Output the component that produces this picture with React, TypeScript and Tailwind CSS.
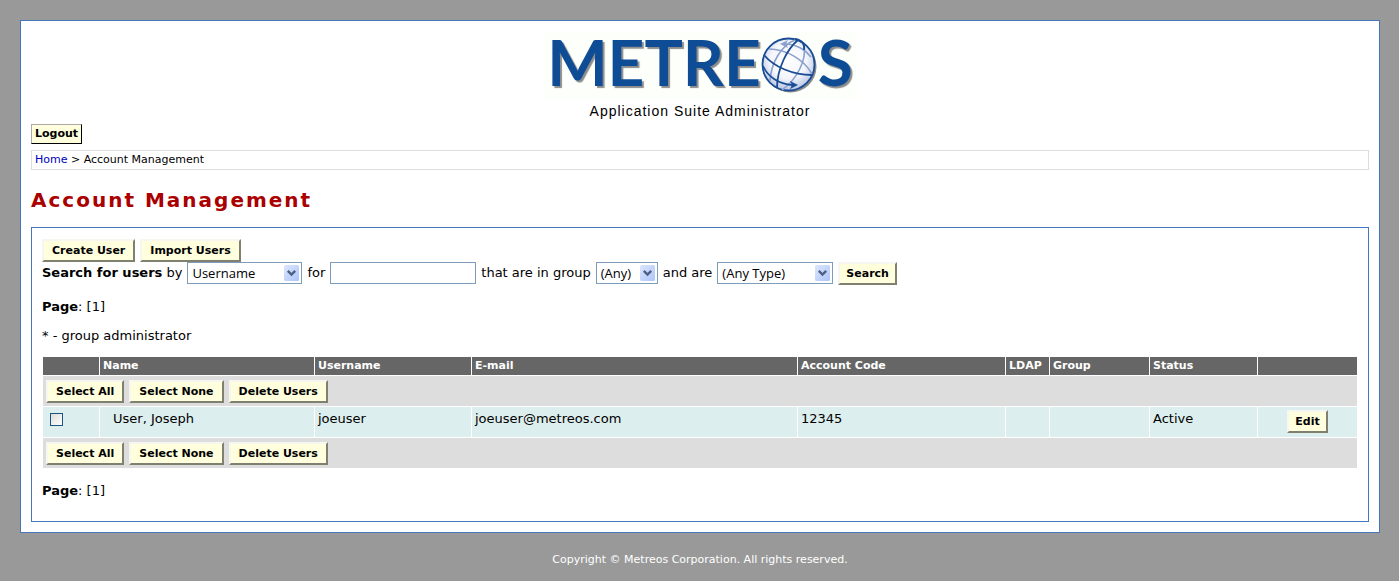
import type { ButtonHTMLAttributes, ReactNode, SelectHTMLAttributes } from "react";

type ActionButtonProps = ButtonHTMLAttributes<HTMLButtonElement> & { compact?: boolean };

function ActionButton({ children, compact = false, ...rest }: ActionButtonProps) {
  return (
    <button
      type="button"
      className={`h-[23px] whitespace-nowrap border-2 border-t-[#f8f6f0] border-r-[#808070] border-b-[#808070] border-l-[#f8f6f0] bg-[#ffffdd] text-[11px] leading-[19px] font-bold ${compact ? "px-1.5" : "px-2"}`}
      {...rest}
    >
      {children}
    </button>
  );
}

function DropDown({ width, children, ...rest }: SelectHTMLAttributes<HTMLSelectElement> & { width: string }) {
  return (
    <span className={`relative inline-block h-[22px] ${width}`}>
      <select
        className="block h-full w-full appearance-none border border-[#7f9db9] bg-white pr-4 pl-1 font-['Open_Sans','Noto_Sans',sans-serif] text-[13px] leading-5"
        {...rest}
      >
        {children}
      </select>
      <svg className="pointer-events-none absolute top-[3px] right-[3px]" width="15" height="16" viewBox="0 0 15 16" aria-hidden="true">
        <defs>
          <linearGradient id="arrow-face" x1="0" y1="0" x2="1" y2="1">
            <stop offset="0" stopColor="#dce6fe" />
            <stop offset="1" stopColor="#adc5fa" />
          </linearGradient>
        </defs>
        <rect width="15" height="16" rx="1.5" fill="url(#arrow-face)" />
        <path d="M3.8 5.8 7.5 9.5l3.7-3.7" fill="none" stroke="#4d6185" strokeWidth="2.4" />
      </svg>
    </span>
  );
}

function Globe() {
  return (
    <svg width="57" height="58" viewBox="0 0 57 58" aria-hidden="true" className="mt-[5px] shrink-0">
      <defs>
        <radialGradient id="globe-face" cx="0.5" cy="0.42" r="0.58">
          <stop offset="0" stopColor="#ffffff" />
          <stop offset="0.6" stopColor="#f4f6fc" />
          <stop offset="1" stopColor="#b7c4e2" />
        </radialGradient>
      </defs>
      <circle cx="29.5" cy="30.5" r="26" fill="#8c8c8c" />
      <circle cx="27.5" cy="28.5" r="26" fill="url(#globe-face)" stroke="#1a4c94" strokeWidth="1.8" />
      <g fill="none" stroke="#8ba0cc" strokeWidth="1.6">
        <path d="M8 13C24 13 43 23 51 38" />
        <path d="M25 8C34 8 44 13 50 21" />
        <path d="M34 4C21 9 10 26 9 45" />
        <path d="M43 9C46 25 35 44 21 54" />
      </g>
      <path d="M19 8l8-4-2 4 2 4z" fill="#8ba0cc" />
      <g fill="none" stroke="#1a4c94" strokeWidth="1.8">
        <path d="M3 19C13 31 32 39 51 39" />
        <path d="M2 30C7 41 18 48 31 49" />
        <path d="M37 4C26 13 16 33 16 52" />
        <path d="M34 3C41 4 44 8 43 14" />
      </g>
      <path d="M37 49l-8-4 2 4-2 4z" fill="#1a4c94" />
    </svg>
  );
}

function Logo() {
  return (
    <div className="mx-auto flex h-[68px] w-[314px] items-start justify-center bg-[#fdfffb] font-['Lato',sans-serif] text-[64px] leading-[62px] font-bold text-[#0f4c96] [text-shadow:2px_2px_1px_#8c8c8c]">
      <span>METRE</span>
      <Globe />
      <span>S</span>
    </div>
  );
}

function PageList() {
  return (
    <p>
      <b>Page</b>: [1]
    </p>
  );
}

function BulkActions() {
  return (
    <tr className="h-[30px] bg-[#dddddd]">
      <td colSpan={9} className="px-[3px] py-0">
        <div className="flex gap-[5px]">
          <ActionButton>Select All</ActionButton>
          <ActionButton>Select None</ActionButton>
          <ActionButton>Delete Users</ActionButton>
        </div>
      </td>
    </tr>
  );
}

function Cell({ children }: { children?: ReactNode }) {
  return <td className="px-[3px] py-1">{children}</td>;
}

const headings = ["", "Name", "Username", "E-mail", "Account Code", "LDAP", "Group", "Status", ""];

export default function App() {
  return (
    <div className="min-h-screen bg-[#999999] py-5 pr-[19px] pl-5 font-['DejaVu_Sans',sans-serif] text-[13px] leading-4 text-black">
      <main className="border border-[#4477bb] bg-white p-2.5">
        <header>
          <Logo />
          <p className="mt-1 text-center font-['Liberation_Sans',sans-serif] text-[14px] leading-4 tracking-[1px]">
            Application Suite Administrator
          </p>
        </header>
        <button
          type="button"
          className="mt-[5px] block h-5 border border-t-[#aaaaaa] border-r-black border-b-black border-l-[#aaaaaa] bg-[#ffffdd] px-[3px] text-[11px] leading-[18px] font-bold"
        >
          Logout
        </button>
        <nav className="mt-1.5 border border-[#dddddd] px-[3px] text-[11px] leading-[18px]">
          <a href="#home" className="text-[#0000bb]">Home</a> &gt; Account Management
        </nav>
        <h1 className="mt-4 text-[20px] leading-7 font-bold tracking-widest text-[#aa0000]">Account Management</h1>

        <section className="mt-[13px] border border-[#4477bb] px-2.5 pt-[11px] pb-[22px]">
          <div className="flex gap-[5px]">
            <ActionButton>Create User</ActionButton>
            <ActionButton>Import Users</ActionButton>
          </div>
          <form className="flex flex-wrap items-start gap-x-[5px] leading-[22px]" onSubmit={(e) => e.preventDefault()}>
            <label htmlFor="field"><b>Search for users</b> by</label>
            <DropDown id="field" width="w-[115px]"><option>Username</option></DropDown>
            <label htmlFor="term">for</label>
            <input id="term" type="text" className="h-[22px] w-[146px] border border-[#7f9db9] bg-white px-1" />
            <label htmlFor="group">that are in group</label>
            <DropDown id="group" width="w-[62px]"><option>(Any)</option></DropDown>
            <label htmlFor="type">and are</label>
            <DropDown id="type" width="w-[116px]"><option>(Any Type)</option></DropDown>
            <ActionButton type="submit" compact>Search</ActionButton>
          </form>
          <div className="mt-3.5"><PageList /></div>
          <p className="mt-[13px]">* - group administrator</p>

          <table className="mt-3 w-full table-fixed border-separate border-spacing-[1px]">
            <colgroup>
              <col className="w-14" />
              <col className="w-[214px]" />
              <col className="w-[156px]" />
              <col />
              <col className="w-[207px]" />
              <col className="w-[43px]" />
              <col className="w-[99px]" />
              <col className="w-[107px]" />
              <col className="w-[99px]" />
            </colgroup>
            <thead>
              <tr className="h-[18px] bg-[#666666] text-left text-[11px] leading-[18px] text-white">
                {headings.map((h, i) => (
                  <th key={i} className="px-[3px] py-0 font-bold">{h}</th>
                ))}
              </tr>
            </thead>
            <tbody>
              <BulkActions />
              <tr className="h-[30px] bg-[#ddeeee] align-top">
                <td className="px-[7px] pt-1.5">
                  <input
                    type="checkbox"
                    aria-label="Select User, Joseph"
                    className="block size-[13px] appearance-none border border-[#1d5281] bg-linear-to-br from-[#dcdcd7] to-white checked:bg-[#1d5281]"
                  />
                </td>
                <td className="py-1 pr-[3px] pl-[13px]">User, Joseph</td>
                <Cell>joeuser</Cell>
                <Cell>joeuser@metreos.com</Cell>
                <Cell>12345</Cell>
                <Cell />
                <Cell />
                <Cell>Active</Cell>
                <td className="pt-[3px] pb-1 text-center">
                  <div className="flex justify-center"><ActionButton compact>Edit</ActionButton></div>
                </td>
              </tr>
              <BulkActions />
            </tbody>
          </table>
          <div className="mt-3.5"><PageList /></div>
        </section>
      </main>
      <footer className="mt-5 text-center text-[11px] leading-[14px] text-white">
        Copyright © Metreos Corporation. All rights reserved.
      </footer>
    </div>
  );
}
